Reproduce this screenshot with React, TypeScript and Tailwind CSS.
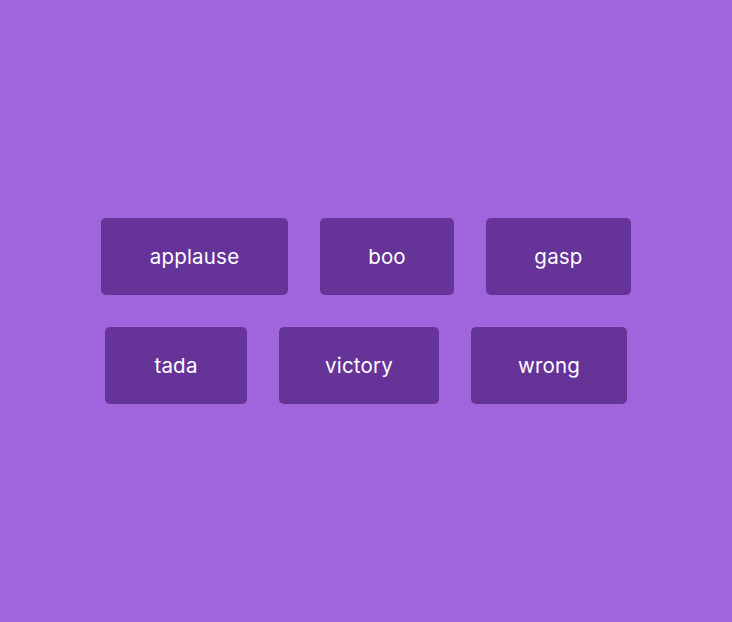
import React from "react";

const sounds = [
  [
    { name: "applause", width: "w-[187px]" },
    { name: "boo", width: "w-[134px]" },
    { name: "gasp", width: "w-[145px]" },
  ],
  [
    { name: "tada", width: "w-[142px]" },
    { name: "victory", width: "w-[160px]" },
    { name: "wrong", width: "w-[156px]" },
  ],
];

const App = () => {
  return (
    <div
      className="min-h-screen bg-[#a064dc] flex flex-col items-center justify-center gap-8"
      style={{ fontFamily: "Inter, 'Noto Sans', sans-serif" }}
    >
      {sounds.map((row, i) => (
        <div key={i} className="flex justify-center gap-8">
          {row.map((s) => (
            <button
              key={s.name}
              className={`${s.width} h-[77px] pt-[2px] rounded-[5px] bg-[#663399] text-white text-[20.5px] tracking-[0.2px] flex items-center justify-center`}
            >
              {s.name}
            </button>
          ))}
        </div>
      ))}
    </div>
  );
};

export default App;
